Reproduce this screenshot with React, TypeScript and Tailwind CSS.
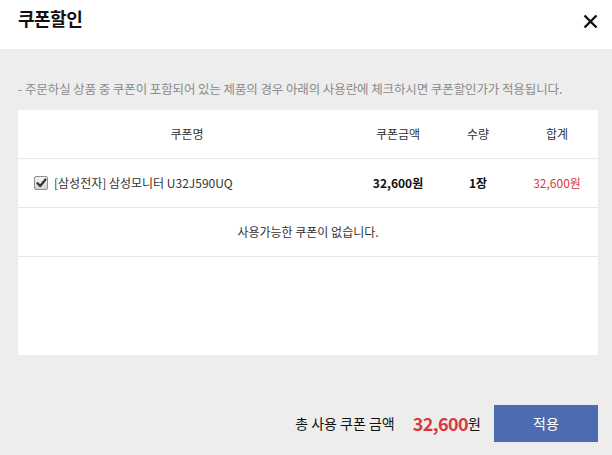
import React from "react";

const font = { fontFamily: '"Noto Sans CJK KR", "Noto Sans", sans-serif' };

function Check() {
  return (
    <span className="inline-flex h-[14px] w-[14px] items-center justify-center rounded-[2px] border border-[#8f8f8f] bg-gradient-to-b from-[#f4f4f4] to-[#d4d4d4]">
      <svg width="11" height="10" viewBox="0 0 11 10">
        <path d="M1.5 5.2 L4.2 8 L9.5 1.5" fill="none" stroke="#333" strokeWidth="2.2" strokeLinecap="round" strokeLinejoin="round" />
      </svg>
    </span>
  );
}

export default function App() {
  return (
    <div className="flex h-[455px] w-[612px] flex-col bg-[#ededed] text-[#222]" style={font}>
      <div className="flex h-[49px] items-center justify-between bg-white pl-[18px] pr-[14px]">
        <h1 className="-mt-[12px] text-[18px] font-bold tracking-[-0.5px] text-[#111]">쿠폰할인</h1>
        <svg width="15" height="15" viewBox="0 0 15 15" className="-mt-[6px]">
          <path d="M1.5 1.5 L13.5 13.5 M13.5 1.5 L1.5 13.5" stroke="#111" strokeWidth="2.4" />
        </svg>
      </div>
      <div className="flex flex-1 flex-col pl-[18px] pr-[14px] pt-[29px]">
        <p className="text-[12.5px] leading-[22px] tracking-[-0.1px] text-[#8a8a8a]">
          - 주문하실 상품 중 쿠폰이 포함되어 있는 제품의 경우 아래의 사용란에 체크하시면 쿠폰할인가가 적용됩니다.
        </p>
        <div className="mt-[10px] h-[245px] bg-white text-[12px] tracking-[0px]">
          <div className="grid h-[49px] grid-cols-[338px_84px_76px_82px] items-center border-b border-[#e8e8e8] text-[#333]">
            <div className="text-center">쿠폰명</div>
            <div className="text-center">쿠폰금액</div>
            <div className="text-center">수량</div>
            <div className="text-center">합계</div>
          </div>
          <div className="grid h-[49px] grid-cols-[338px_84px_76px_82px] items-center border-b border-[#e8e8e8]">
            <div className="flex items-center gap-[6px] pl-[16px] text-[#333]">
              <Check />
              <span>[삼성전자] 삼성모니터 U32J590UQ</span>
            </div>
            <div className="text-center font-bold text-[#111]">32,600원</div>
            <div className="text-center font-bold text-[#111]">1장</div>
            <div className="text-center text-[#d9393d]">32,600원</div>
          </div>
          <div className="flex h-[49px] items-center justify-center border-b border-[#e8e8e8] text-[#333]">
            사용가능한 쿠폰이 없습니다.
          </div>
        </div>
        <div className="mt-[50px] flex items-center justify-end">
          <span className="text-[14px] tracking-[0px] text-[#111]">총 사용 쿠폰 금액</span>
          <span className="ml-[18px] text-[18px] font-bold tracking-[-0.6px] text-[#d9393d]">32,600</span>
          <span className="text-[14px] text-[#111]">원</span>
          <button className="ml-[13px] h-[37px] w-[104px] bg-[#4b6cb0] text-[14px] text-white">적용</button>
        </div>
      </div>
    </div>
  );
}
